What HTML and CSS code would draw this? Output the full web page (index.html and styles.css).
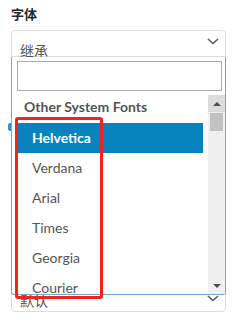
FILE: index.html
```html
<!DOCTYPE html>
<html lang="zh">
<head>
  <meta charset="UTF-8">
  <meta name="viewport" content="width=device-width, initial-scale=1.0">
  <title>字体</title>
  <link rel="stylesheet" href="styles.css">
</head>
<body>
  <div class="panel">
    <div class="field">
      <div class="label">字体</div>
      <div class="select">
        <span class="select-value">继承</span>
        <svg class="chevron" width="12" height="7" viewBox="0 0 12 7"><path d="M1 1l5 4.5L11 1" fill="none" stroke="#555d66" stroke-width="1.6"/></svg>
      </div>
    </div>

    <div class="field next">
      <div class="select">
        <span class="select-value">默认</span>
        <svg class="chevron" width="12" height="7" viewBox="0 0 12 7"><path d="M1 1l5 4.5L11 1" fill="none" stroke="#555d66" stroke-width="1.6"/></svg>
      </div>
    </div>

    <span class="focus-edge"></span>

    <div class="dropdown">
      <div class="search"><input type="text" class="search-input"></div>
      <div class="results">
        <ul class="options">
          <li class="group">Other System Fonts</li>
          <li class="option active">Helvetica</li>
          <li class="option">Verdana</li>
          <li class="option">Arial</li>
          <li class="option">Times</li>
          <li class="option">Georgia</li>
          <li class="option">Courier</li>
        </ul>
        <div class="scrollbar">
          <div class="scroll-btn"><svg width="8" height="4" viewBox="0 0 8 4"><path d="M0 4L4 0l4 4z" fill="#505050"/></svg></div>
          <div class="scroll-thumb"></div>
          <div class="scroll-track"></div>
          <div class="scroll-btn down"><svg width="8" height="4" viewBox="0 0 8 4"><path d="M0 0h8L4 4z" fill="#505050"/></svg></div>
        </div>
      </div>
    </div>

    <div class="highlight-box"></div>
  </div>
</body>
</html>
```

FILE: styles.css
```css
:root {
  --text: #23282d;
  --muted: #555;
  --border: #ddd;
  --focus: #6fa9d6;
  --active: #0784c0;
  --marker: #f5221b;
}

body {
  margin: 0;
  background: #fff;
  font-family: "Lato", "Noto Sans CJK SC", sans-serif;
  color: var(--text);
}

.panel {
  position: relative;
  width: 241px;
  height: 331px;
  padding: 7px 15px 0 11px;
  box-sizing: border-box;
}

.label {
  font-family: "Noto Sans CJK SC", sans-serif;
  font-size: 13px;
  font-weight: 700;
  line-height: 14px;
  height: 23px;
}

.select {
  display: flex;
  align-items: center;
  justify-content: space-between;
  height: 27px;
  padding: 0 6px 0 8px;
  border: 1px solid var(--border);
  border-radius: 4px 4px 0 0;
  box-sizing: border-box;
}

.select-value {
  font-family: "Noto Sans CJK SC", sans-serif;
  font-size: 14px;
  color: var(--muted);
  position: relative;
  top: 6px;
}

.chevron {
  position: relative;
  top: -2px;
}

.next {
  margin-top: 228px;
}

.next .select {
  border-radius: 0 0 4px 4px;
  height: 27px;
}

.next .select-value {
  top: 1px;
}

.next .chevron {
  top: 0;
}

.focus-edge {
  position: absolute;
  left: 8px;
  top: 123px;
  width: 3px;
  height: 8px;
  border-radius: 2px 0 0 2px;
  background: #3d8fcf;
}

.dropdown {
  position: absolute;
  left: 11px;
  top: 57px;
  width: 215px;
  height: 238px;
  background: #fff;
  border: 1px solid var(--focus);
  border-top: none;
  border-radius: 0 0 3px 3px;
  box-sizing: border-box;
  display: flex;
  flex-direction: column;
}

.search {
  padding: 4px 3px 2px 5px;
}

.search-input {
  display: block;
  width: 100%;
  height: 30px;
  margin: 0;
  border: 1px solid #aaa;
  box-sizing: border-box;
  outline: none;
}

.results {
  flex: 1;
  display: flex;
  overflow: hidden;
}

.options {
  flex: 1;
  list-style: none;
  margin: 0;
  padding: 0 5px 0 6px;
  overflow: hidden;
}

.group {
  height: 30px;
  line-height: 28px;
  padding-left: 6px;
  font-size: 14px;
  font-weight: 700;
  color: #555;
}

.option {
  height: 30px;
  line-height: 30px;
  padding-left: 14px;
  font-size: 14px;
  color: var(--muted);
}

.option.active {
  background: var(--active);
  color: #fff;
  font-weight: 700;
}

.scrollbar {
  width: 17px;
  display: flex;
  flex-direction: column;
  background: #f0f0f0;
  margin-top: 2px;
}

.scroll-btn {
  height: 17px;
  display: flex;
  align-items: center;
  justify-content: center;
  background: #dcdcdc;
}

.scroll-btn.down {
  background: #f0f0f0;
}

.scroll-thumb {
  height: 18px;
  margin: 1px 2px 0;
  background: #c1c1c1;
}

.scroll-track {
  flex: 1;
}

.highlight-box {
  position: absolute;
  left: 15px;
  top: 117px;
  width: 88px;
  height: 182px;
  border: 3px solid var(--marker);
  border-radius: 3px;
  box-sizing: border-box;
}
```
